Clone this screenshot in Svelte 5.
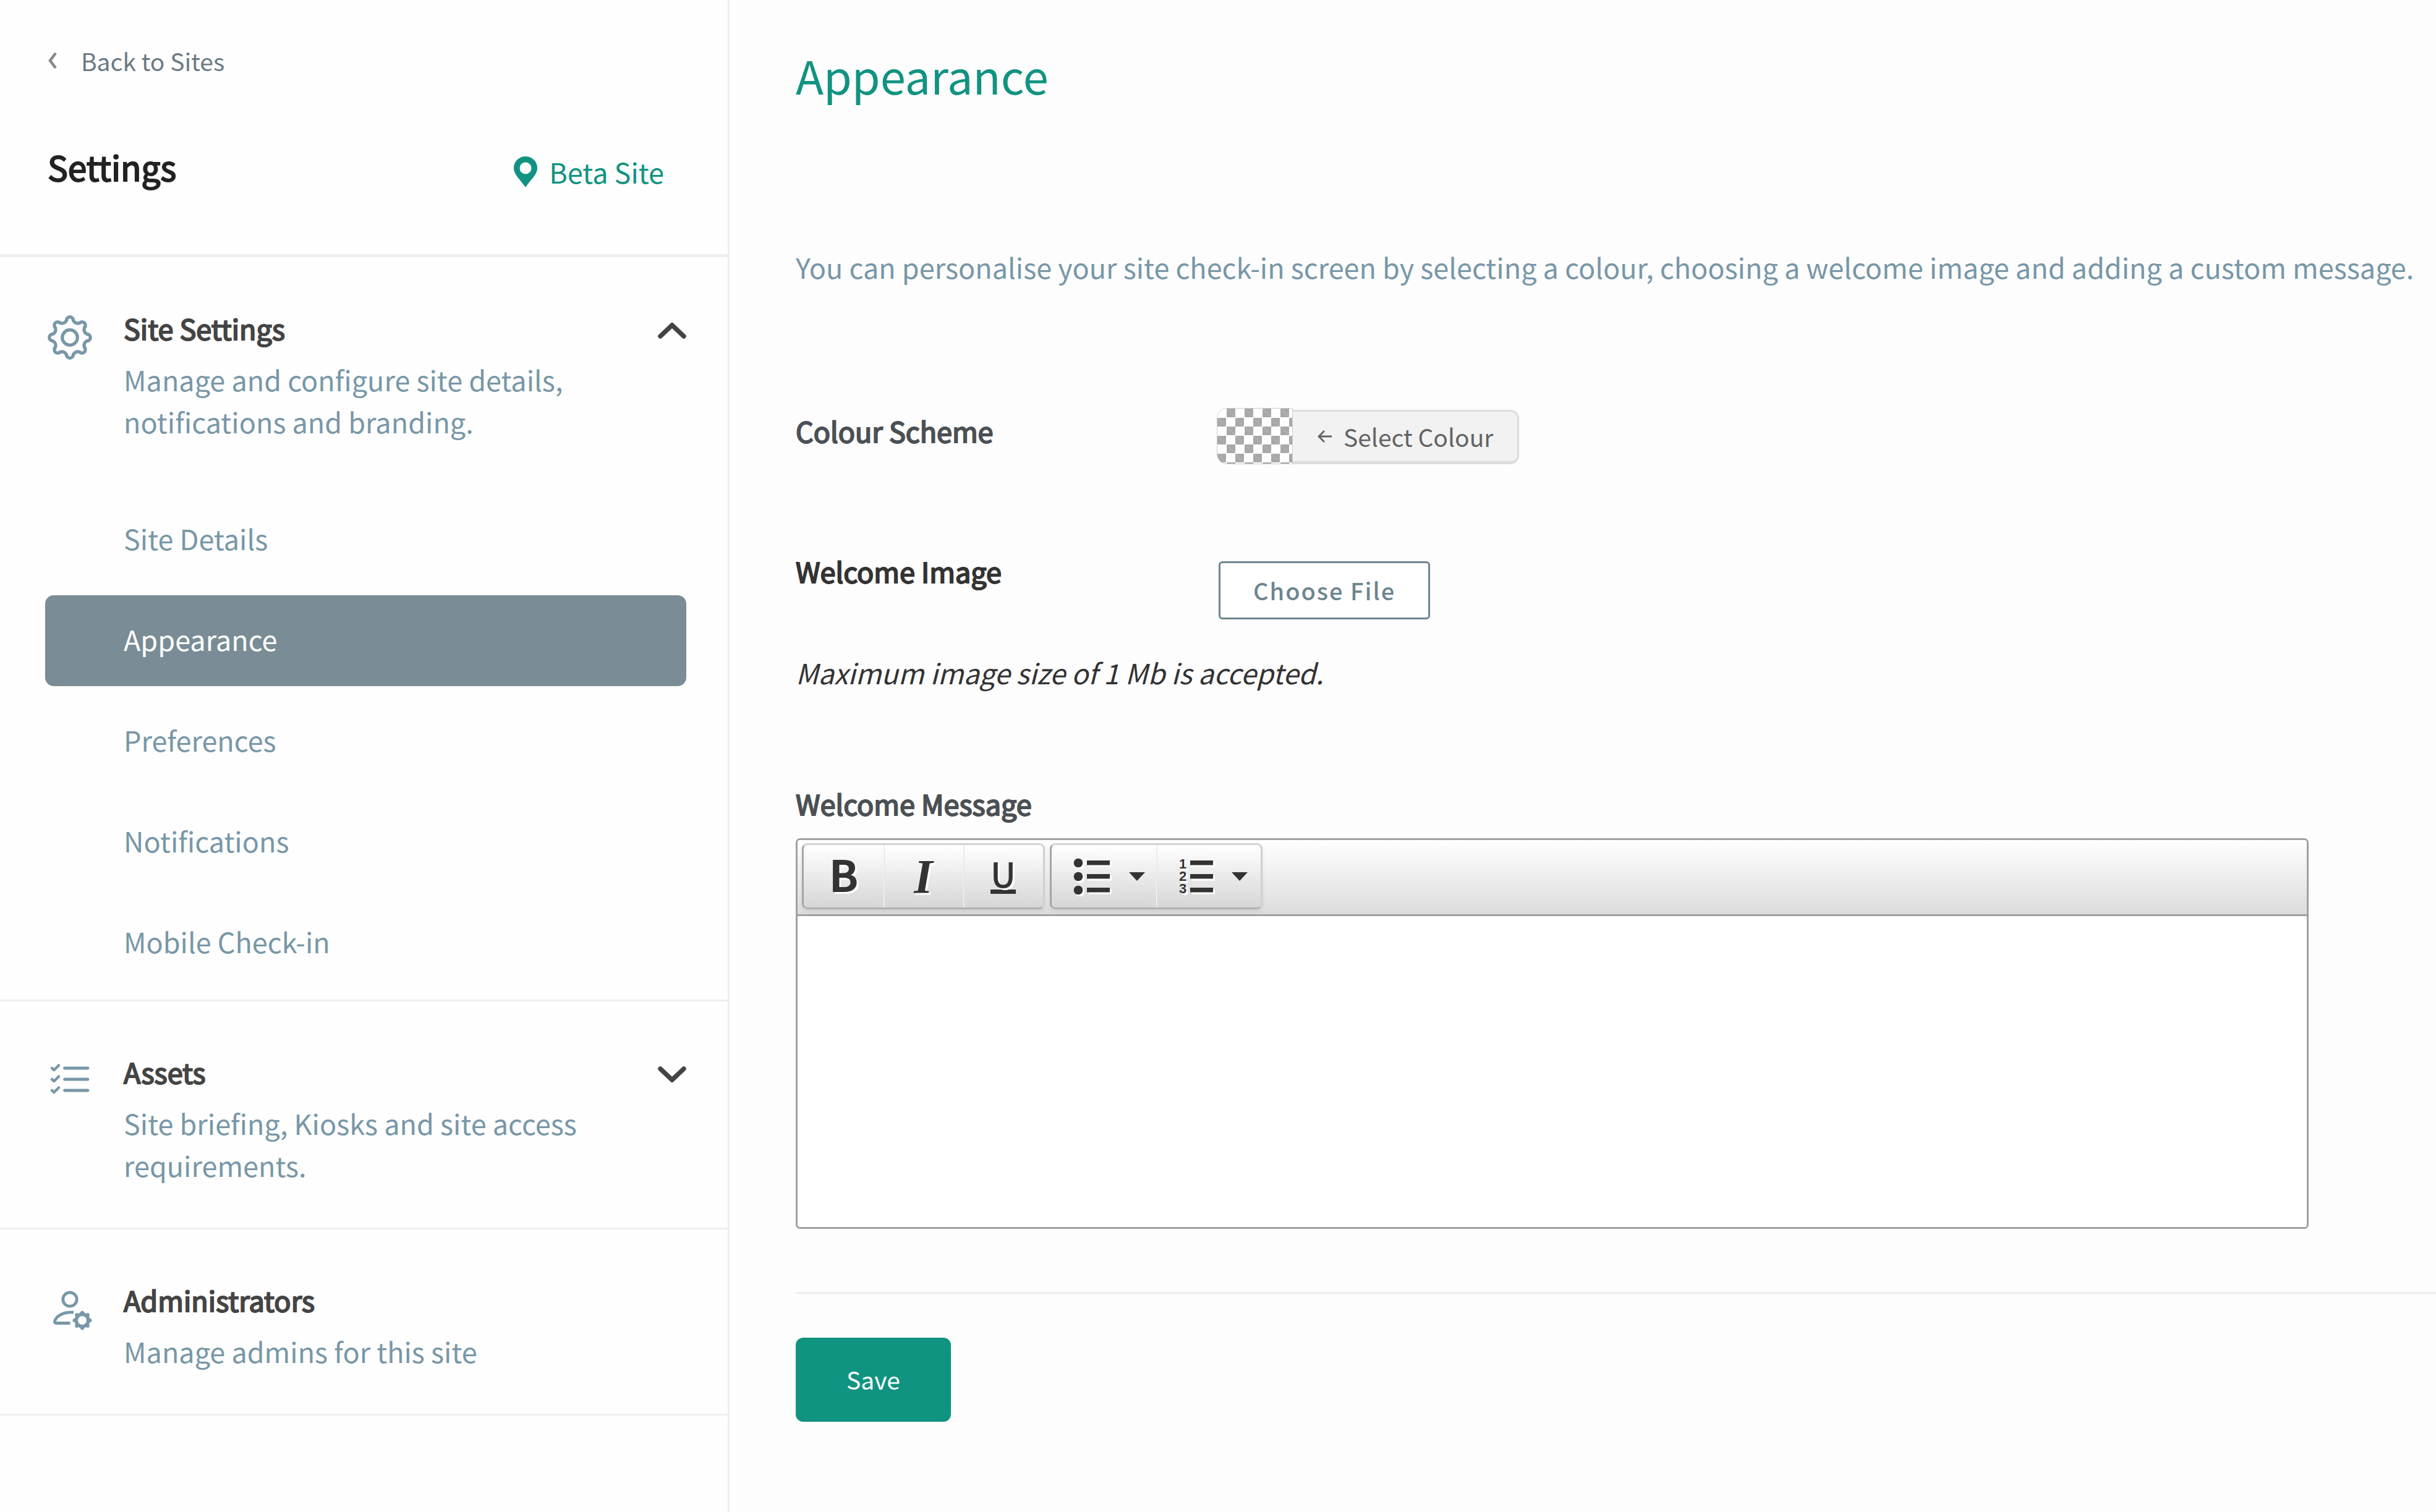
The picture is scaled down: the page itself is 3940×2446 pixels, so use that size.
<script>
  const links = ['Site Details', 'Appearance', 'Preferences', 'Notifications', 'Mobile Check-in'];
  let active = $state('Appearance');
  let message = $state('');

  // Outline of the eight-lobed cog: round tips joined by round valleys.
  function cogPath(tipRing, tipRadius, valleyRing, valleyRadius) {
    const point = (radius, degrees) => {
      const a = (degrees * Math.PI) / 180;
      return [radius * Math.cos(a), radius * Math.sin(a)];
    };
    const towards = ([x, y], [p, q], d) => {
      const length = Math.hypot(p - x, q - y);
      return `${(x + ((p - x) / length) * d).toFixed(2)} ${(y + ((q - y) / length) * d).toFixed(2)}`;
    };
    let d = '';
    for (let k = 0; k < 8; k++) {
      const tip = point(tipRing, k * 45);
      const before = point(valleyRing, k * 45 - 22.5);
      const after = point(valleyRing, k * 45 + 22.5);
      const next = point(tipRing, k * 45 + 45);
      d += `${k ? 'L' : 'M'}${towards(tip, before, tipRadius)}`;
      d += `A${tipRadius} ${tipRadius} 0 0 1 ${towards(tip, after, tipRadius)}`;
      d += `L${towards(after, tip, valleyRadius)}`;
      d += `A${valleyRadius} ${valleyRadius} 0 0 0 ${towards(after, next, valleyRadius)}`;
    }
    return d + 'Z';
  }
  const cog = cogPath(28, 5.3, 33, 7.5);
  const smallCog = cogPath(12.8, 2.8, 16, 3.6);
</script>

<div class="page">
  <aside class="sidebar">
    <header class="head">
      <a class="back" href="#sites">
        <svg width="16" height="26" viewBox="0 0 16 26" aria-hidden="true">
          <path d="M13 1 4 13l9 12" fill="none" stroke="#888" stroke-width="4.5" />
        </svg>
        Back to Sites
      </a>
      <div class="head-row">
        <h2>Settings</h2>
        <a class="site" href="#site">
          <svg width="38" height="50" viewBox="0 0 38 50" aria-hidden="true">
            <path
              fill="#109381"
              fill-rule="evenodd"
              d="M19 0C8.500 0 0 8.200 0 18.500 0 29 8 34.500 19 50 30 34.500 38 29 38 18.500 38 8.200 29.500 0 19 0Zm0 9.500a9.500 9.500 0 1 1 0 19 9.500 9.500 0 0 1 0-19Z"
            />
          </svg>
          Beta Site
        </a>
      </div>
    </header>

    <section class="group">
      <div class="group-head">
        <svg class="icon" width="74" height="74" viewBox="-37 -37 74 74" aria-hidden="true">
          <g fill="none" stroke="#7897a7" stroke-width="5.2">
            <path d={cog} />
            <circle r="12.300" />
          </g>
        </svg>
        <div class="group-text">
          <h3>Site Settings</h3>
          <p>Manage and configure site details, notifications and branding.</p>
        </div>
        <button class="toggle" aria-label="Collapse Site Settings">
          <svg width="46" height="26" viewBox="0 0 46 26" aria-hidden="true">
            <path d="M4 22 23 4l19 18" fill="none" stroke="#444" stroke-width="7.500" stroke-linecap="round" />
          </svg>
        </button>
      </div>
      <nav class="links">
        {#each links as link}
          <a
            href="#{link}"
            class:active={link === active}
            aria-current={link === active ? 'page' : undefined}
            onclick={() => (active = link)}>{link}</a
          >
        {/each}
      </nav>
    </section>

    <section class="group closed">
      <div class="group-head">
        <svg class="icon" width="74" height="74" viewBox="0 0 74 74" aria-hidden="true">
          <g fill="none" stroke="#7897a7" stroke-linecap="round" stroke-linejoin="round">
            {#each [16, 34, 52] as y}
              <path d="M8 {y}l3.500 3 7.500-7.500" stroke-width="4.500" />
              <path d="M28.500 {y}H66" stroke-width="4.800" />
            {/each}
          </g>
        </svg>
        <div class="group-text">
          <h3>Assets</h3>
          <p>Site briefing, Kiosks and site access requirements.</p>
        </div>
        <button class="toggle" aria-label="Expand Assets">
          <svg width="46" height="26" viewBox="0 0 46 26" aria-hidden="true">
            <path d="M4 4l19 18L42 4" fill="none" stroke="#444" stroke-width="7.500" stroke-linecap="round" />
          </svg>
        </button>
      </div>
    </section>

    <section class="group closed">
      <div class="group-head">
        <svg class="icon" width="74" height="74" viewBox="0 0 74 74" aria-hidden="true">
          <g fill="none" stroke="#7897a7" stroke-width="4.800">
            <circle cx="37" cy="21" r="11.200" />
            <path d="M43 42C27 40.500 14 48 12.500 57q-.3 2.500 2.500 2.500h22.500" />
          </g>
          <path
            transform="translate(57 55)"
            fill="#7897a7"
            fill-rule="evenodd"
            d="{smallCog}M-7 0a7 7 0 1 0 14 0a7 7 0 1 0-14 0Z"
          />
        </svg>
        <div class="group-text">
          <h3>Administrators</h3>
          <p>Manage admins for this site</p>
        </div>
      </div>
    </section>
  </aside>

  <main class="content">
    <h1>Appearance</h1>
    <p class="intro">
      You can personalise your site check-in screen by selecting a colour, choosing a welcome image and adding a custom
      message.
    </p>

    <div class="row colour-row">
      <label class="label" for="colour">Colour Scheme</label>
      <button class="colour" id="colour">
        <svg class="swatch" width="123" height="91" aria-hidden="true">
          <defs>
            <pattern id="checks" width="29" height="29" patternUnits="userSpaceOnUse">
              <path fill="#fff" d="M0 0h29v29H0z" />
              <path fill="#a8a8a8" d="M15 0h14v14H15zM0 15h14v14H0z" />
              <path stroke="#bcbcbc" d="m15 0 14 14M0 15l14 14" />
            </pattern>
          </defs>
          <rect width="123" height="91" fill="url(#checks)" />
        </svg>
        <span class="colour-text">
          <svg width="24" height="20" viewBox="0 0 24 20" aria-hidden="true">
            <path d="M11 1 2 10l9 9M2 10h21" fill="none" stroke="#636363" stroke-width="2.800" />
          </svg>
          Select Colour
        </span>
      </button>
    </div>

    <div class="row image-row">
      <label class="label dark" for="file">Welcome Image</label>
      <button class="file" id="file">Choose File</button>
    </div>
    <p class="hint">Maximum image size of 1 Mb is accepted.</p>

    <label class="label message-label" for="message">Welcome Message</label>
    <div class="editor">
      <div class="toolbar" role="toolbar" aria-label="Formatting">
        <div class="tools">
          <button class="tool bold" aria-label="Bold">B</button>
          <button class="tool italic" aria-label="Italic">I</button>
          <button class="tool underline" aria-label="Underline"><span>U</span></button>
        </div>
        <div class="tools lists">
          <button class="tool list" aria-label="Bulleted list">
            <svg width="60" height="60" viewBox="0 0 60 60" fill="#333" aria-hidden="true">
              {#each [8, 30, 52] as y}
                <circle cx="8" cy={y} r="7.300" />
                <path d="M22 {y - 4}h37v7.500H22z" />
              {/each}
            </svg>
            <svg class="caret" width="26" height="14" viewBox="0 0 26 14" aria-hidden="true">
              <path d="M0 0h26L13 14z" fill="#333" />
            </svg>
          </button>
          <button class="tool list" aria-label="Numbered list">
            <span class="numbered">
              <span class="digits"><span>1</span><span>2</span><span>3</span></span>
              <svg width="37" height="60" viewBox="0 0 37 60" fill="#333" aria-hidden="true">
                {#each [8, 30, 52] as y}
                  <path d="M0 {y - 4}h37v7.500H0z" />
                {/each}
              </svg>
            </span>
            <svg class="caret" width="26" height="14" viewBox="0 0 26 14" aria-hidden="true">
              <path d="M0 0h26L13 14z" fill="#333" />
            </svg>
          </button>
        </div>
      </div>
      <textarea id="message" bind:value={message}></textarea>
    </div>

    <hr />
    <button class="save">Save</button>
  </main>
</div>

<style>
  :global(body) {
    margin: 0;
  }
  .page,
  .page * {
    box-sizing: border-box;
  }
  .page {
    display: flex;
    min-height: 100vh;
    background: #fdfdfd;
    color: #444;
    font-family: 'Noto Sans CJK SC', 'Open Sans', sans-serif;
    font-size: 45px;
    line-height: 68px;
  }
  h1,
  h2,
  h3,
  p {
    margin: 0;
    font-weight: 400;
  }
  a {
    color: inherit;
    text-decoration: none;
  }
  button {
    margin: 0;
    padding: 0;
    border: 0;
    background: none;
    color: inherit;
    font: inherit;
    cursor: pointer;
  }
  svg {
    display: block;
    flex: none;
  }

  .sidebar {
    flex: none;
    width: 1180px;
    border-right: 3px solid #eee;
    background: #fefefe;
  }
  .head {
    padding: 68px 103px 77px 77px;
    border-bottom: 5px solid #eee;
  }
  .back {
    display: flex;
    align-items: center;
    gap: 38px;
    width: max-content;
    color: #6b7a83;
    font-size: 39px;
    line-height: 60px;
  }
  .head-row {
    display: flex;
    align-items: flex-end;
    justify-content: space-between;
    margin-top: 97px;
  }
  h2 {
    color: #222;
    font-size: 55px;
    line-height: 88px;
    -webkit-text-stroke: 2px currentColor;
  }
  .head-row h2 {
    margin-bottom: 21px;
  }
  .site {
    display: flex;
    align-items: center;
    gap: 19px;
    margin-bottom: 22px;
    color: #109381;
  }

  .group {
    padding: 81px 67px 18px 73px;
    border-bottom: 3px solid #eee;
  }
  .group.closed {
    padding: 80px 67px 67px 73px;
  }
  .group-head {
    display: grid;
    grid-template-columns: 74px 1fr 46px;
    column-gap: 53px;
  }
  .icon {
    margin: 12px 0 0 3px;
  }
  h3 {
    color: #444;
    font-size: 45px;
    -webkit-text-stroke: 2px currentColor;
  }
  .group-text p {
    max-width: 760px;
    margin-top: 15px;
    color: #7897a7;
  }
  .toggle {
    align-self: start;
    margin-top: 25px;
  }
  .links {
    display: flex;
    flex-direction: column;
    gap: 16px;
    margin-top: 84px;
  }
  .links a {
    padding: 37px 127px 42px;
    border-radius: 14px;
    color: #7897a7;
  }
  .links a.active {
    background: #7a8c95;
    color: #fff;
  }

  .content {
    flex: 1;
    min-width: 0;
    padding: 65px 0 80px 107px;
  }
  h1 {
    color: #109381;
    font-size: 74px;
    line-height: 112px;
  }
  .intro {
    margin-top: 221px;
    color: #7897a7;
  }
  .row {
    display: grid;
    grid-template-columns: 681px 1fr;
    align-items: start;
    justify-items: start;
  }
  .label {
    display: block;
    color: #4b5054;
    -webkit-text-stroke: 2px currentColor;
  }
  .dark {
    color: #333;
  }
  .colour-row {
    margin-top: 194px;
  }
  .colour-row .label {
    margin-top: 3px;
  }
  .colour {
    display: flex;
    align-items: flex-end;
    color: #636363;
    font-size: 39px;
    line-height: 60px;
  }
  .swatch {
    border: 1px solid #ccc;
    border-radius: 16px 0 0 16px;
  }
  .colour-text {
    display: flex;
    align-items: center;
    gap: 18px;
    height: 88px;
    padding: 0 39px 0 40px;
    border: solid #ddd;
    border-width: 3px 3px 5px 0;
    border-radius: 0 14px 14px 0;
    background: #f2f2f2;
  }
  .image-row {
    margin-top: 139px;
  }
  .file {
    height: 94px;
    margin: 18px 0 0 3px;
    padding: 0 53px;
    border: 3px solid #6d858f;
    border-radius: 6px;
    background: #fff;
    color: #6d858f;
    font-size: 38px;
    font-weight: 500;
    letter-spacing: 2px;
    line-height: 60px;
  }
  .hint {
    margin-top: 52px;
    color: #333;
    font-style: italic;
  }
  .message-label {
    margin-top: 144px;
  }

  .editor {
    margin: 22px 206px 0 0;
    overflow: hidden;
    border: 3px solid #a0a0a0;
    border-radius: 7px;
    background: #fff;
  }
  .toolbar {
    display: flex;
    gap: 8px;
    padding: 5px 7px 8px;
    border-bottom: 3px solid #a0a0a0;
    background: linear-gradient(#fff, #dcdcdc);
  }
  .tools {
    display: grid;
    grid-template-columns: repeat(3, 129px);
    height: 107px;
    border: 3px solid;
    border-color: #d4d4d4 #d0d0d0 #b2b2b2 #a6a6a6;
    border-radius: 9px;
    background: linear-gradient(#fff, #d6d6d6);
    box-shadow: 0 3px 6px rgba(0, 0, 0, 0.08);
  }
  .lists {
    grid-template-columns: repeat(2, 169px);
  }
  .tool {
    display: flex;
    align-items: center;
    justify-content: center;
    color: #333;
    text-shadow: 3px 3px 0 #fff;
  }
  .tool + .tool {
    box-shadow: inset 1px 0 #f4f4f4, inset 2px 0 #e2e2e2;
  }
  .bold {
    padding-bottom: 10px;
    font-size: 70px;
    font-weight: 700;
  }
  .italic {
    font-family: 'Liberation Serif', serif;
    font-size: 78px;
    font-style: italic;
    font-weight: 700;
  }
  .underline span {
    padding-bottom: 5px;
    border-bottom: 7px solid #333;
    font-size: 56px;
    font-weight: 500;
    line-height: 44px;
  }
  .list {
    gap: 30px;
    padding-left: 16px;
  }
  .list svg {
    filter: drop-shadow(3px 3px 0 #fff);
  }
  .list .caret {
    filter: none;
  }
  .numbered {
    display: flex;
    gap: 6px;
  }
  .digits {
    display: flex;
    flex-direction: column;
    font-family: 'Liberation Sans', sans-serif;
    font-size: 22px;
    font-weight: 700;
    line-height: 20px;
  }
  textarea {
    display: block;
    width: 100%;
    height: 503px;
    padding: 24px;
    border: 0;
    outline: 0;
    background: #fff;
    color: #333;
    font: inherit;
    resize: none;
  }

  hr {
    margin: 102px 0 71px;
    border: 0;
    border-top: 3px solid #eee;
  }
  .save {
    height: 136px;
    padding: 0 82px 2px;
    border-radius: 12px;
    background: #109381;
    color: #fff;
    font-size: 39px;
    line-height: 60px;
  }
</style>
